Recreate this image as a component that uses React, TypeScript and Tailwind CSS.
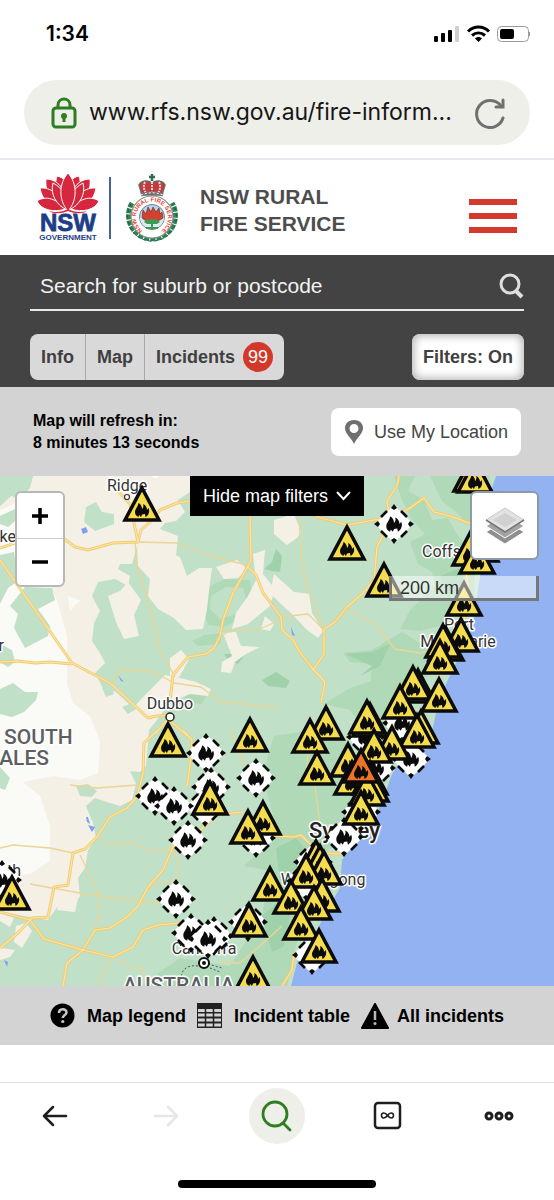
import { useState } from "react";

const fires = [
  [471, -21], [475, -20], [142, 8], [347, 47], [384, 84], [481, 49], [470, 53], [477, 61],
  [464, 103], [461, 139], [446, 148], [443, 145], [440, 161], [418, 190], [413, 187], [400, 206],
  [439, 199], [421, 231], [417, 235], [326, 227], [310, 240], [317, 272], [370, 224], [367, 221],
  [392, 247], [374, 250], [348, 264], [352, 282], [370, 282], [371, 289], [367, 293], [361, 312],
  [168, 244], [250, 239], [210, 302], [263, 322], [248, 331], [12, 397], [270, 388],
  [316, 361], [320, 366], [324, 372], [306, 375], [291, 401], [322, 399], [314, 407],
  [301, 427], [319, 450], [249, 424], [253, 477]
];

const otherIncidents = [
  [394, 48], [206, 277], [256, 302], [211, 311], [205, 331], [155, 320], [174, 330],
  [188, 364], [256, 362], [176, 423], [248, 446], [191, 457], [214, 460], [208, 463],
  [2, 404], [402, 247], [366, 261], [411, 283], [376, 292], [361, 336], [344, 361],
  [313, 386], [312, 479], [306, 405]
];

const labels = [
  { text: "Lightning", x: 127, y: -3, size: 16, anchor: "middle" },
  { text: "Ridge", x: 127, y: 15, size: 16, anchor: "middle" },
  { text: "Bourke", x: 16, y: 66, size: 16, anchor: "end" },
  { text: "Cobar", x: 4, y: 175, size: 16, anchor: "end" },
  { text: "Dubbo", x: 170, y: 233, size: 16, anchor: "middle" },
  { text: "Coffs", x: 422, y: 81, size: 16, anchor: "start" },
  { text: "Port", x: 459, y: 154, size: 16, anchor: "middle" },
  { text: "Macquarie", x: 458, y: 171, size: 16, anchor: "middle" },
  { text: "Griffith", x: 21, y: 400, size: 16, anchor: "end" },
  { text: "Canberra", x: 204, y: 478, size: 16, anchor: "middle" },
  { text: "Wollongong", x: 323, y: 409, size: 16, anchor: "middle" }
] as const;

const mainRoads = [
  "M0 84 L40 141 L72 187 L110 207 L148 242 L157 240 L170 239",
  "M0 186 L17 185 L35 187 L50 186 L72 188",
  "M0 72 L15 67 L63 62 L75 71 L88 74 L113 67 L138 66 L141 54 L150 46 L160 34 L177 27 L195 24",
  "M117 14 L130 28 L138 66",
  "M250 40 L251 84 L247 92 L233 117 L223 144 L220 160 L214 172 L206 178 L188 181 L173 199 L170 225",
  "M247 90 L256 99 L263 117 L270 126 L281 141 L282 154 L293 164 L300 176 L312 192 L325 206 L321 227",
  "M299 33 L321 42 L347 49 L374 44 L394 41 L410 32 L424 22 L434 36 L450 40 L461 44 L474 49",
  "M399 0 L397 10 L387 25 L390 45 L377 71 L374 104 L362 118 L347 131 L335 146 L324 153 L324 178 L313 194",
  "M158 254 L144 267 L143 297 L137 321 L127 332 L110 341 L97 361 L85 373 L73 377 L68 409 L54 411 L48 441 L32 442 L18 457 L0 472",
  "M0 436 L30 444 L44 463 L83 474 L113 481",
  "M183 254 L192 264 L190 290 L187 311",
  "M243 336 L217 339 L200 354 L173 371 L163 394 L148 411 L138 430 L127 441 L110 452 L95 454 L83 474 L67 487 L63 510",
  "M168 243 L155 258",
  "M168 243 L190 262",
  "M274 360 L294 361 L301 359 L311 369 L325 377 L341 378",
  "M294 477 L292 494 L282 510",
  "M488 50 L466 95 L470 125 L455 170 L440 200",
  "M113 481 L133 471 L143 454 L158 449 L180 447"
];

const minorRoads = [
  "M135 66 L137 90 L153 141 L160 174 L175 201",
  "M138 66 L177 67 L213 81 L247 89",
  "M280 144 L260 153 L230 154 L222 160",
  "M112 207 L120 194 L154 196 L174 207 L201 211 L222 227 L245 228 L280 232",
  "M299 40 L302 91 L311 121 L324 154",
  "M281 141 L308 138 L324 154",
  "M347 133 L377 150 L395 173 L420 177 L445 170",
  "M0 372 L13 369 L50 372 L73 377",
  "M97 361 L110 369 L133 367 L153 376 L173 371",
  "M80 379 L97 414 L99 440 L95 454",
  "M30 408 L80 417 L133 424 L160 427",
  "M70 309 L97 312 L137 309",
  "M113 481 L103 497 L100 510",
  "M173 371 L179 390 L175 405 L150 409",
  "M230 254 L245 290 L250 300",
  "M220 486 L240 487 L262 468 L282 450",
  "M309 240 L307 290 L315 310 L320 350",
  "M113 481 L130 491 L143 493 L146 510"
];

const outback = [
  "M34 0 L190 0 L190 16 L178 24 L185 36 L176 45 L165 47 L160 53 L178 60 L176 80 L160 78 L145 70 L137 70 L132 88 L120 88 L118 93 L130 100 L128 110 L115 103 L98 106 L92 120 L100 135 L94 147 L92 165 L100 177 L105 187 L95 197 L103 212 L116 216 L133 232 L146 218 L165 199 L180 202 L196 206 L211 213 L208 220 L190 218 L170 226 L160 240 L149 254 L146 290 L140 296 L130 295 L136 308 L132 324 L120 330 L110 327 L95 322 L86 330 L93 347 L96 362 L88 374 L85 392 L78 402 L80 420 L72 433 L58 430 L48 444 L0 436 L0 30 Z",
  "M137 68 L157 71 L180 81 L187 100 L199 92 L212 92 L209 115 L207 133 L203 153 L186 154 L174 142 L158 133 L148 120 L150 103 L138 90 Z",
  "M216 91 L237 84 L247 93 L238 102 L224 103 Z",
  "M253 78 L265 74 L263 98 L275 113 L270 130 L248 148 L232 153 L236 137 L248 120 L256 104 Z",
  "M108 120 L120 115 L128 106 L141 124 L134 139 L139 160 L124 163 L116 146 Z",
  "M223 157 L236 156 L241 170 L260 171 L246 178 L235 186 L231 197 L221 196 L222 186 L232 180 Z",
  "M170 182 L181 174 L189 183 L180 200 L170 206 Z",
  "M274 44 L294 38 L301 56 L297 62 L287 69 L274 58 Z",
  "M274 98 L294 116 L309 118 L312 137 L323 155 L318 162 L306 153 L292 138 L281 128 L270 117 Z",
  "M265 140 L274 148 L270 155 L261 153 Z",
  "M16 450 L26 447 L32 455 L22 472 L14 466 Z",
  "M0 437 L14 442 L10 451 L0 445 Z",
  "M0 472 L15 474 L10 481 L0 484 Z",
  "M60 420 L79 418 L75 436 L57 434 Z"
];

const plains = [
  "M0 34 L18 38 L35 80 L57 124 L67 160 L67 207 L73 227 L90 240 L100 265 L98 297 L80 304 L53 300 L23 306 L40 320 L50 350 L50 385 L30 398 L0 400 Z",
  "M68 120 L81 125 L76 128 L70 135 Z",
  "M0 34 L20 25 L32 15 L45 22 L45 34 L0 60 Z"
];

const patches = [
  "M0 0 L33 0 L30 12 L20 24 L10 19 L0 28 Z",
  "M0 40 L15 33 L15 45 L8 51 L0 48 Z",
  "M0 79 L14 76 L18 105 L8 112 L0 128 Z",
  "M25 111 L52 112 L55 124 L38 133 L50 150 L48 160 L25 172 L14 152 L18 138 L10 130 Z",
  "M0 168 L12 174 L15 186 L8 191 L0 186 Z",
  "M0 213 L13 207 L25 216 L38 216 L36 224 L24 236 L12 241 L0 238 Z",
  "M0 291 L10 302 L5 314 L0 312 Z",
  "M86 31 L96 26 L102 36 L114 38 L114 48 L95 55 L84 46 Z",
  "M102 212 L111 210 L114 218 L106 221 Z",
  "M122 231 L134 226 L138 232 L128 238 Z",
  "M76 310 L88 308 L97 315 L92 321 L80 320 Z"
];

const forest = [
  "M204 113 L225 103 L250 104 L252 125 L246 140 L224 151 L208 149 L203 132 Z",
  "M192 165 L204 159 L222 157 L220 168 L198 170 Z",
  "M185 219 L199 210 L208 218 L201 228 L186 226 Z",
  "M394 0 L415 0 L408 15 L424 24 L432 44 L448 42 L458 60 L476 80 L474 120 L440 150 L420 155 L400 153 L410 134 L435 110 L432 96 L418 88 L410 66 L425 58 L412 44 L402 24 Z",
  "M343 177 L372 174 L402 156 L425 170 L438 164 L440 190 L415 210 L390 225 L370 260 L350 234 L324 228 L350 212 L371 205 L372 188 L350 186 Z",
  "M274 260 L300 256 L345 262 L356 330 L352 360 L318 380 L306 430 L296 470 L287 510 L140 510 L180 482 L230 490 L262 440 L270 395 L244 390 L262 372 L276 350 L262 300 Z",
  "M430 0 L490 0 L486 28 L470 50 L455 35 L442 25 Z",
  "M272 32 L286 28 L296 35 L288 42 Z"
];

const deepForest = [
  "M174 116 L180 101 L191 113 L192 125 L180 122 Z",
  "M264 93 L272 86 L276 73 L282 80 L280 96 L272 95 Z",
  "M224 178 L246 177 L238 188 L228 184 Z",
  "M262 204 L276 196 L290 205 L286 212 L268 210 Z",
  "M270 0 L286 3 L280 16 L274 14 Z",
  "M345 178 L372 176 L390 168 L380 190 L360 200 L372 190 Z",
  "M440 100 L460 92 L466 110 L448 122 Z",
  "M276 372 L296 362 L306 374 L296 396 L280 404 Z",
  "M262 440 L276 428 L290 440 L284 470 L272 476 Z"
];

const FLAME =
  "M-7 2 C-7 -1 -4 -3 -3.500 -7 C-1 -6 0 -3 0 -1 C1 -2 2 -4 1 -6 C4 -5 5 -2 5 0 L6.500 -2 C8 1 7 5 3.500 7 L3 4 L0 4.500 L-1 7 L-3 5 L-3.500 7 C-6 6 -7 4 -7 2 Z";

const Fire = ({ x, y, color = "#f4dc4c" }: { x: number; y: number; color?: string }) => (
  <g transform={`translate(${x} ${y})`}>
    <path d="M0 4 L17 36 H-17 Z" fill={color} stroke="#0b0b0b" strokeWidth="3.500" strokeMiterlimit="4" />
    <path d={FLAME} transform="translate(0 26)" fill="#0b0b0b" />
  </g>
);

const OtherIncident = ({ x, y }: { x: number; y: number }) => (
  <g transform={`translate(${x} ${y})`}>
    <path d="M0 -17 L17 0 L0 17 L-17 0 Z" fill="#fff" stroke="#fff" strokeWidth="3" />
    <path
      d="M-3 -16 L0 -20 L3 -16 L0 -14 Z M-3 16 L0 20 L3 16 L0 14 Z M-16 -3 L-20 0 L-16 3 L-14 0 Z M16 -3 L20 0 L16 3 L14 0 Z"
      fill="#0b0b0b"
    />
    <path
      d="M-13 -7 L-7 -13 M7 -13 L13 -7 M13 7 L7 13 M-7 13 L-13 7"
      stroke="#0b0b0b"
      strokeWidth="2.600"
      fill="none"
    />
    <path d={FLAME} transform="scale(1.1)" fill="#0b0b0b" />
  </g>
);

const IncidentMap = () => (
  <svg
    viewBox="0 0 554 510"
    preserveAspectRatio="xMidYMid slice"
    className="block w-full h-[510px]"
    role="img"
    aria-label="Incident map of New South Wales"
  >
    <rect width="554" height="510" fill="#c1e0c8" />
    {forest.map((d, i) => <path key={i} d={d} fill="#b0d9b8" />)}
    {deepForest.map((d, i) => <path key={i} d={d} fill="#9fd1aa" />)}
    <path d="M211 120 L226 111 L243 112 L246 124 L236 138 L220 143 L210 133 Z" fill="#c1e0c8" />
    {outback.map((d, i) => <path key={i} d={d} fill="#f5f0e6" />)}
    {plains.map((d, i) => <path key={i} d={d} fill="#fafaf6" />)}
    {patches.map((d, i) => <path key={i} d={d} fill="#c1e0c8" />)}

    {/* Ocean and lakes */}
    <path
      d="M496 0 L488 25 L492 50 L486 80 L481 94 L476 127 L473 150 L462 175 L454 191 L446 208 L438 226 L434 247 L430 262 L408 274 L392 298 L386 315 L377 337 L374 354 L354 367 L342 384 L340 412 L328 432 L317 454 L304 467 L297 487 L291 510 L554 510 L554 0 Z"
      fill="#93b2f1"
    />
    <path d="M81 53 L86 51 L88 56 L83 58 Z M118 199 L124 206 L121 205 Z M86 341 L88 341 L90 348 L87 346 Z M88 349 L95 351 L92 356 Z M4 484 L8 486 L7 491 Z M291 151 L295 160 L292 159 Z" fill="#7f9ff0" />

    {minorRoads.map((d, i) => <path key={i} d={d} fill="none" stroke="#e9d596" strokeWidth="1.300" strokeLinejoin="round" />)}
    {mainRoads.map((d, i) => <path key={i} d={d} fill="none" stroke="#f2cb70" strokeWidth="3" strokeLinejoin="round" />)}
    {mainRoads.map((d, i) => <path key={i} d={d} fill="none" stroke="#fbe5a6" strokeWidth="1.200" strokeLinejoin="round" />)}
    <path d="M198 490 C182 488 178 500 184 510 M208 488 L222 492 M210 492 L220 496" fill="none" stroke="#4b5563" strokeDasharray="2 2" />

    {/* Towns */}
    <circle cx="127" cy="21" r="2.500" fill="#fff" stroke="#333" strokeWidth="1.200" />
    <circle cx="170" cy="241" r="4" fill="#fff" stroke="#222" strokeWidth="1.500" />
    <circle cx="204" cy="487" r="5" fill="#fff" stroke="#111" strokeWidth="2" />
    <circle cx="204" cy="487" r="2" fill="#111" />

    {/* Labels */}
    <g fontFamily="Roboto, sans-serif" fill="#333" stroke="#fff" strokeWidth="3" strokeLinejoin="round" paintOrder="stroke">
      {labels.map((l) => (
        <text key={l.text} x={l.x} y={l.y} fontSize={l.size} textAnchor={l.anchor}>{l.text}</text>
      ))}
      <text x="309" y="362" fontSize="22" fontWeight="500" fill="#222">Sydney</text>
      <g fontSize="21" fontWeight="500" fill="#5c6064">
        <text x="4" y="268">SOUTH</text>
        <text x="49" y="289" textAnchor="end">WALES</text>
        <text x="123" y="516">AUSTRALIA</text>
      </g>
    </g>

    {otherIncidents.map(([x, y], i) => <OtherIncident key={i} x={x} y={y} />)}
    {fires.map(([x, y], i) => <Fire key={i} x={x} y={y} />)}
    <Fire x={361} y={270} color="#ee7227" />
  </svg>
);

const StatusBar = () => (
  <div className="h-20 pt-5 pl-[46px] pr-6 flex items-start justify-between">
    <span className="font-['Inter',sans-serif] text-[21px] leading-7 font-semibold text-black">1:34</span>
    <svg width="98" height="18" viewBox="0 0 98 18" className="mt-[5px]">
      <rect x="2" y="11" width="4" height="6" rx="1" />
      <rect x="9" y="8" width="4" height="9" rx="1" />
      <rect x="16" y="5" width="4" height="12" rx="1" />
      <rect x="23" y="1" width="4" height="16" rx="1" fill="#cfcfcf" />
      <g fill="none" stroke="#000" strokeWidth="3">
        <path d="M36 6.500 C42 0.500 51 0.500 57 6.500" />
        <path d="M40 10.500 C44 7 49 7 53 10.500" />
      </g>
      <path d="M43 13.500 C45 11.500 48 11.500 50 13.500 L46.500 17 Z" />
      <rect x="65.500" y="1.500" width="31" height="15" rx="4" fill="none" stroke="#9a9a9a" />
      <rect x="68" y="4" width="14" height="10" rx="2" />
      <path d="M97.300 7 V11" stroke="#9a9a9a" strokeWidth="1.500" />
    </svg>
  </div>
);

const AddressBar = () => (
  <div className="px-6 pb-[13px] border-b-2 border-[#e6e8ee]">
    <div className="h-[65px] rounded-full bg-[#eeefe9] flex items-center pl-[27px] pr-6">
      <svg width="26" height="32" viewBox="0 0 26 32" fill="none" stroke="#2f7d22" strokeWidth="3" className="shrink-0">
        <rect x="2" y="11" width="22" height="19" rx="3" />
        <path d="M7 11 V8 C7 0 19 0 19 8 V11" />
        <circle cx="13" cy="19" r="1.500" />
        <path d="M13 20 V25" />
      </svg>
      <input
        aria-label="Address"
        className="flex-1 min-w-0 ml-3 bg-transparent outline-none font-['Inter',sans-serif] text-[23px] text-[#161616]"
        defaultValue="www.rfs.nsw.gov.au/fire-inform..."
      />
      <button aria-label="Reload" className="shrink-0">
        <svg width="32" height="32" viewBox="0 0 32 32" fill="none" stroke="#707070" strokeWidth="3" strokeLinecap="round">
          <path d="M29 21 A13.500 13.500 0 1 1 27 9" />
          <path d="M29 3 V10 H22" />
        </svg>
      </button>
    </div>
  </div>
);

const NswLogo = () => (
  <svg width="62" height="67" viewBox="0 0 62 67" role="img" aria-label="NSW Government">
    <g fill="#d7273f" stroke="#fff" strokeWidth="1">
      <path d="M20 2 C26 3 31 8 31 16 L22 24 C18 16 18 8 20 2 Z" />
      <path d="M42 2 C36 3 31 8 31 16 L40 24 C44 16 44 8 42 2 Z" />
      <path d="M9 5 C17 5 24 10 27 19 L18 28 C11 22 8 14 9 5 Z" />
      <path d="M53 5 C45 5 38 10 35 19 L44 28 C51 22 54 14 53 5 Z" />
      <path d="M3 14 C13 13 23 20 28 35 C15 35 5 27 3 14 Z" />
      <path d="M59 14 C49 13 39 20 34 35 C47 35 57 27 59 14 Z" />
      <path d="M0 27 C9 21 20 25 28 35 C17 39 4 36 0 27 Z" />
      <path d="M62 27 C53 21 42 25 34 35 C45 39 58 36 62 27 Z" />
      <path d="M16 9 C26 14 32 25 30 36 C19 31 13 20 16 9 Z" />
      <path d="M46 9 C36 14 30 25 32 36 C43 31 49 20 46 9 Z" />
      <path d="M31 -1 C40 9 41 26 31 37 C21 26 22 9 31 -1 Z" />
    </g>
    <path d="M12 37 C18 39 26 38 31 35 C36 38 44 39 50 37 C46 40 38 40 31 37 C24 40 16 40 12 37 Z" fill="#d7273f" />
    <g fill="#1d3e86" fontFamily="'Liberation Sans', sans-serif" fontWeight="700" textAnchor="middle">
      <text x="31" y="57" fontSize="24" stroke="#1d3e86" strokeWidth="0.800">NSW</text>
      <text x="31" y="66" fontSize="8">GOVERNMENT</text>
    </g>
  </svg>
);

const RfsCrest = () => (
  <svg width="54" height="68" viewBox="0 0 54 68" role="img" aria-label="NSW Rural Fire Service crest">
    <defs>
      <path id="ring" d="M17.500 56.500 A16 16 0 1 1 36.500 56.500" />
    </defs>
    <path d="M7 29 A23.500 23.500 0 1 0 47 29" fill="none" stroke="#2c8256" strokeWidth="5" strokeDasharray="5 1" />
    <path d="M6 30 A24.500 24.500 0 1 0 48 30" fill="none" stroke="#1b5f3c" strokeDasharray="3 3" />
    {/* Crown */}
    <path d="M17 21 L14 11 C17 6 23 6 27 9 C31 6 37 6 40 11 L37 21 Z" fill="#c83a3a" stroke="#6a6a6a" strokeWidth="1.500" />
    <path d="M27 8 V19 M20 8 C18 12 19 16 21 19 M34 8 C36 12 35 16 33 19" fill="none" stroke="#d9d9d9" strokeWidth="2" strokeDasharray="2 1" />
    <path d="M16 21 C23 18 31 18 38 21" fill="none" stroke="#777" strokeWidth="3" />
    <path d="M16 21 C23 18 31 18 38 21" fill="none" stroke="#f3f3f3" strokeDasharray="2 2" />
    <path d="M27 0 V7 M24 3 H30" stroke="#2c6e50" strokeWidth="2.500" />
    {/* Seal */}
    <circle cx="27" cy="43" r="21" fill="#fff" stroke="#8a8a8a" strokeWidth="1.200" />
    <circle cx="27" cy="43" r="12.500" fill="#b9d3ea" stroke="#6a7f86" />
    <path d="M15 44 C19 40 35 40 39 44 C38 58 16 58 15 44 Z" fill="#d9ecf5" />
    <path d="M17 44 L18 36 L21 40 L23 33 L26 38 L28 33 L31 38 L34 34 L35 40 L37 38 L38 44 C32 49 22 49 17 44 Z" fill="#d5412e" stroke="#5a2c22" strokeWidth="0.600" />
    <path d="M19 48 C22 44 32 44 35 48 L32 50 H22 Z M26 49 H28 V53 H26 Z M21 53 H33 V55 H21 Z" fill="#3b9b54" />
    <text fontFamily="'Liberation Sans', sans-serif" fontWeight="700" fontSize="6" fill="#df4a3c">
      <textPath href="#ring">NSW RURAL FIRE SERVICE</textPath>
    </text>
  </svg>
);

const SiteHeader = () => (
  <header className="h-[95px] px-[37px] flex items-center">
    <NswLogo />
    <div className="ml-[10px] w-[2px] h-[62px] bg-[#44639f]" />
    <div className="ml-[14px]">
      <RfsCrest />
    </div>
    <h1 className="ml-[21px] pt-1 text-[21px] leading-[27px] font-bold text-[#4d4d4d]">
      NSW RURAL
      <br />
      FIRE SERVICE
    </h1>
    <button aria-label="Menu" className="ml-auto mt-4 w-12 flex flex-col gap-2">
      <span className="h-[6px] bg-[#d13a2c]" />
      <span className="h-[6px] bg-[#d13a2c]" />
      <span className="h-[6px] bg-[#d13a2c]" />
    </button>
  </header>
);

const SearchPanel = () => (
  <section className="bg-[#434343] px-[30px] pt-2 pb-[7px]">
    <form className="h-12 flex items-center border-b-2 border-[#e8e8e8]" onSubmit={(e) => e.preventDefault()}>
      <input
        aria-label="Search for suburb or postcode"
        placeholder="Search for suburb or postcode"
        className="flex-1 min-w-0 px-[10px] bg-transparent outline-none text-[21px] text-white placeholder:text-[#f2f2f2]"
      />
      <button aria-label="Search">
        <svg width="25" height="26" viewBox="0 0 25 26" fill="none" stroke="#dedede" strokeWidth="3">
          <circle cx="11" cy="11" r="9" />
          <path d="M17 18 L23 24" strokeWidth="4" />
        </svg>
      </button>
    </form>
    <div className="mt-[23px] flex justify-between text-lg font-bold text-[#404040]">
      <div className="h-[46px] flex rounded-lg overflow-hidden bg-[#d9d9d9] divide-x divide-[#a8a8a8]">
        <button className="px-[11px]">Info</button>
        <button className="px-[11px]">Map</button>
        <button className="px-[11px] flex items-center gap-2">
          Incidents
          <span className="w-[30px] h-[30px] rounded-full bg-[#d3382b] text-white font-normal flex items-center justify-center">
            99
          </span>
        </button>
      </div>
      <button className="h-[46px] px-[11px] rounded-lg bg-white shadow-[inset_0_0_8px_2px_#b5b5b5]">Filters: On</button>
    </div>
  </section>
);

const RefreshBar = () => (
  <section className="bg-[#d3d3d3] h-[89px] px-[33px] flex items-center justify-between">
    <p className="text-base leading-[22px] font-bold text-black">
      Map will refresh in:
      <br />8 minutes 13 seconds
    </p>
    <button className="h-12 px-[13px] rounded-lg bg-white flex items-center gap-[10px] text-lg text-[#444]">
      <svg width="20" height="25" viewBox="0 0 20 25">
        <path
          d="M10 1 C4 1 1 5 1 9 C1 15 7 18 10 25 C13 18 19 15 19 9 C19 5 16 1 10 1 Z M10 5 A4.500 4.500 0 1 1 10 14 A4.500 4.500 0 1 1 10 5 Z"
          fill="#6f6f6f"
          fillRule="evenodd"
        />
      </svg>
      Use My Location
    </button>
  </section>
);

const MapPanel = () => {
  const [filtersOpen, setFiltersOpen] = useState(true);

  return (
    <section className="relative overflow-hidden">
      <IncidentMap />

      <div className="absolute top-0 inset-x-0 flex justify-center">
        <button
          className="h-10 px-[13px] bg-black text-white text-lg flex items-center gap-2"
          onClick={() => setFiltersOpen(!filtersOpen)}
        >
          {filtersOpen ? "Hide map filters" : "Show map filters"}
          <svg width="15" height="10" viewBox="0 0 15 10" fill="none" stroke="#fff" strokeWidth="2">
            <path d="M1 1 L7.500 8 L14 1" />
          </svg>
        </button>
      </div>

      <div className="absolute top-[15px] left-[15px] w-[50px] rounded-md border-2 border-[#b9b9b3] bg-white flex flex-col divide-y divide-[#cccccc]">
        <button aria-label="Zoom in" className="h-[46px] flex items-center justify-center">
          <svg width="18" height="18" stroke="#000" strokeWidth="3.500"><path d="M1 9 H17 M9 1 V17" /></svg>
        </button>
        <button aria-label="Zoom out" className="h-[46px] flex items-center justify-center">
          <svg width="18" height="18" stroke="#000" strokeWidth="3.500"><path d="M1 9 H17" /></svg>
        </button>
      </div>

      <div className="absolute top-[15px] right-[15px] flex flex-col items-end gap-4">
        <button aria-label="Layers" className="w-[69px] h-[69px] rounded-md border-2 border-[#8d9aa8] bg-white flex items-center justify-center">
          <svg width="40" height="38" viewBox="0 0 40 38">
            <path d="M1 25 L20 13 L39 25 L20 37 Z" fill="#8f8f8f" stroke="#fff" />
            <path d="M1 19 L20 7 L39 19 L20 31 Z" fill="#a3a3a3" stroke="#fff" />
            <path d="M1 13 L20 1 L39 13 L20 25 Z" fill="#e2e2e2" stroke="#c9c9c9" />
            <path d="M1 13 L20 25 L39 13" fill="none" stroke="#777" strokeWidth="1.500" />
            <path d="M8 13 L20 6 L32 13 L20 20 Z" fill="#d0d0d0" />
          </svg>
        </button>
        <div className="w-[150px] h-[25px] pl-2 border-[3px] border-t-0 border-[#777] bg-white/50 text-lg leading-6 text-[#333]">
          200 km
        </div>
      </div>
    </section>
  );
};

const MapLinks = () => (
  <nav className="bg-[#d3d3d3] h-[59px] flex items-center justify-center gap-[11px] text-lg font-bold text-black">
    <a href="#legend" className="flex items-center gap-3">
      <svg width="25" height="25" viewBox="0 0 25 25">
        <circle cx="12.500" cy="12.500" r="12" />
        <path d="M9 10 C9 5 16.500 5 16.500 9.500 C16.500 12 12.800 12 12.800 15" fill="none" stroke="#c8c8c8" strokeWidth="2.500" />
        <circle cx="12.800" cy="18.500" r="1.600" fill="#c8c8c8" />
      </svg>
      Map legend
    </a>
    <a href="#table" className="flex items-center gap-3">
      <svg width="25" height="25" viewBox="0 0 25 25">
        <rect width="25" height="25" fill="#222" />
        <path d="M1 7.500 H24 M1 12 H24 M1 17 H24 M1 22 H24" stroke="#d3d3d3" strokeWidth="3" />
        <path d="M8.500 5 V24 M16.500 5 V24" stroke="#222" strokeWidth="1.500" />
      </svg>
      Incident table
    </a>
    <a href="#incidents" className="flex items-center gap-2">
      <svg width="28" height="26" viewBox="0 0 28 26">
        <path d="M14 1 L27 25 H1 Z" stroke="#000" strokeWidth="2" strokeLinejoin="round" />
        <path d="M14 8 V17" stroke="#b9b9b9" strokeWidth="2.500" />
        <circle cx="14" cy="20.500" r="1.500" fill="#b9b9b9" />
      </svg>
      All incidents
    </a>
  </nav>
);

const BrowserToolbar = () => (
  <footer className="mt-[37px] border-t border-[#dfe1e8]">
    <div className="h-[65px] grid grid-cols-5 items-center justify-items-center">
      <button aria-label="Back">
        <svg width="26" height="22" viewBox="0 0 26 22" fill="none" stroke="#1e1e20" strokeWidth="2.500" strokeLinecap="round" strokeLinejoin="round">
          <path d="M24 11 H2 M11 2 L2 11 L11 20" />
        </svg>
      </button>
      <button aria-label="Forward" disabled>
        <svg width="26" height="22" viewBox="0 0 26 22" fill="none" stroke="#e6e6ea" strokeWidth="2.500" strokeLinecap="round" strokeLinejoin="round">
          <path d="M2 11 H24 M15 2 L24 11 L15 20" />
        </svg>
      </button>
      <button aria-label="Search the web" className="w-14 h-14 rounded-full bg-[#eeefe9] flex items-center justify-center">
        <svg width="32" height="32" viewBox="0 0 32 32" fill="none" stroke="#2f7d22" strokeWidth="2.800" strokeLinecap="round">
          <circle cx="14" cy="14" r="12" />
          <path d="M22 23 L29 30" />
        </svg>
      </button>
      <button aria-label="Tabs">
        <svg width="29" height="29" viewBox="0 0 29 29" fill="none" stroke="#1e1e20" strokeWidth="2.500">
          <rect x="2" y="2" width="25" height="25" rx="3" />
          <path d="M14.500 14.500 C12 11 8.500 11.500 8.500 14.500 C8.500 17.500 12 18 14.500 14.500 C17 11 20.500 11.500 20.500 14.500 C20.500 17.500 17 18 14.500 14.500 Z" strokeWidth="1.600" />
        </svg>
      </button>
      <button aria-label="More">
        <svg width="30" height="10" viewBox="0 0 30 10" fill="none" stroke="#1e1e20" strokeWidth="3">
          <circle cx="5" cy="5" r="3" />
          <circle cx="15" cy="5" r="3" />
          <circle cx="25" cy="5" r="3" />
        </svg>
      </button>
    </div>
    <div className="mt-8 mx-auto w-[198px] h-2 rounded-full bg-black" />
  </footer>
);

const App = () => {
  return (
    <div className="min-h-screen bg-white font-['Liberation_Sans',Arial,sans-serif]">
      <StatusBar />
      <AddressBar />
      <SiteHeader />
      <main>
        <SearchPanel />
        <RefreshBar />
        <MapPanel />
        <MapLinks />
      </main>
      <BrowserToolbar />
    </div>
  );
};

export default App;
